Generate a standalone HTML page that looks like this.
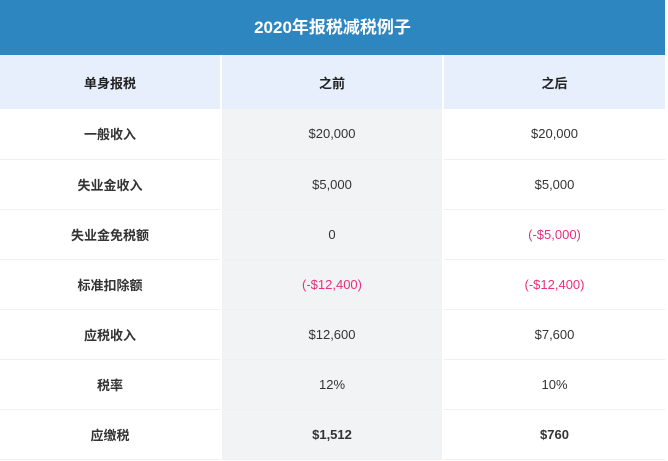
<html><head><style>
body{margin:0;background:#fff;font-family:"Liberation Sans","Noto Sans CJK SC",sans-serif;}
.w{position:absolute;left:0;top:0;width:665px;}
.h{height:55px;background:#2e86c1;color:#fff;font-weight:bold;font-size:17px;text-align:center;line-height:55px;}
table{border-collapse:collapse;width:665px;table-layout:fixed;}
td{text-align:center;font-size:13px;color:#333;height:50px;border-bottom:1px solid #f0f0f0;padding:0;}
tr.t td{background:#e6effb;font-weight:bold;height:54px;border-bottom:none;color:#222;}
td.m{background:#f2f3f5;}
td.l{font-weight:bold;}
td+td{border-left:2px solid #fff;}
.r{color:#e8307e;}
</style></head><body><div class="w">
<div class="h">2020年报税减税例子</div>
<table>
<col style="width:221px"><col style="width:222px"><col style="width:222px">
<tr class="t"><td>单身报税</td><td>之前</td><td>之后</td></tr>
<tr><td class="l">一般收入</td><td class="m">$20,000</td><td>$20,000</td></tr>
<tr><td class="l">失业金收入</td><td class="m">$5,000</td><td>$5,000</td></tr>
<tr><td class="l">失业金免税额</td><td class="m">0</td><td class="r">(-$5,000)</td></tr>
<tr><td class="l">标准扣除额</td><td class="m r">(-$12,400)</td><td class="r">(-$12,400)</td></tr>
<tr><td class="l">应税收入</td><td class="m">$12,600</td><td>$7,600</td></tr>
<tr><td class="l">税率</td><td class="m">12%</td><td>10%</td></tr>
<tr><td class="l">应缴税</td><td class="m l">$1,512</td><td class="l">$760</td></tr>
</table></div></body></html>
